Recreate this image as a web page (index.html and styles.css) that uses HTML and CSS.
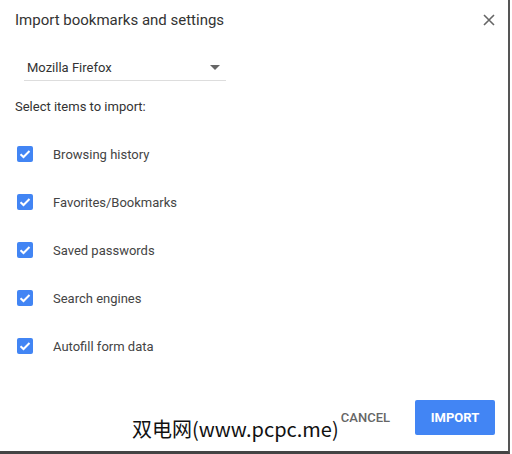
FILE: index.html
```html
<!DOCTYPE html>
<html lang="en">

<head>
  <meta charset="UTF-8">
  <title>Import bookmarks and settings</title>
  <link rel="stylesheet" href="styles.css">
</head>

<body>
  <div class="dialog">
    <div class="header">
      <div class="title">Import bookmarks and settings</div>
      <svg class="close" width="12" height="12" viewBox="0 0 12 12">
        <path d="M1 1L11 11M11 1L1 11" stroke="#666" stroke-width="1.6" />
      </svg>
    </div>

    <div class="select">
      <span>Mozilla Firefox</span>
      <svg class="arrow" width="10" height="5" viewBox="0 0 10 5">
        <path d="M0 0H10L5 5Z" fill="#666" />
      </svg>
    </div>

    <div class="hint">Select items to import:</div>

    <div class="items">
      <div class="item"><span class="box"><svg width="16" height="16" viewBox="0 0 16 16"><path d="M3.5 8.2L6.5 11L12.5 5" stroke="#fff" stroke-width="2" fill="none" /></svg></span>Browsing history</div>
      <div class="item"><span class="box"><svg width="16" height="16" viewBox="0 0 16 16"><path d="M3.5 8.2L6.5 11L12.5 5" stroke="#fff" stroke-width="2" fill="none" /></svg></span>Favorites/Bookmarks</div>
      <div class="item"><span class="box"><svg width="16" height="16" viewBox="0 0 16 16"><path d="M3.5 8.2L6.5 11L12.5 5" stroke="#fff" stroke-width="2" fill="none" /></svg></span>Saved passwords</div>
      <div class="item"><span class="box"><svg width="16" height="16" viewBox="0 0 16 16"><path d="M3.5 8.2L6.5 11L12.5 5" stroke="#fff" stroke-width="2" fill="none" /></svg></span>Search engines</div>
      <div class="item"><span class="box"><svg width="16" height="16" viewBox="0 0 16 16"><path d="M3.5 8.2L6.5 11L12.5 5" stroke="#fff" stroke-width="2" fill="none" /></svg></span>Autofill form data</div>
    </div>

    <div class="footer">
      <span class="watermark">双电网(www.pcpc.me)</span>
      <button class="cancel">CANCEL</button>
      <button class="import">IMPORT</button>
    </div>
  </div>
</body>

</html>
```

FILE: styles.css
```css
body {
  margin: 0;
  background-color: #fff;
  font-family: Roboto, "Liberation Sans", sans-serif;
  color: #333;
}

.dialog {
  width: 508px;
  height: 451px;
  border-right: 2px solid #555;
  border-bottom: 3px solid #444;
  display: flex;
  flex-direction: column;
}

.header {
  display: flex;
  justify-content: space-between;
  align-items: center;
  padding: 10px 13px 0 15px;
  height: 20px;
}

.title {
  font-size: 15px;
  color: #333;
}

.select {
  margin: 24px 0 0 24px;
  width: 202px;
  height: 27px;
  border-bottom: 1px solid #ddd;
  display: flex;
  align-items: center;
  justify-content: space-between;
  padding: 0 0 0 3px;
  box-sizing: border-box;
  font-size: 13px;
  color: #333;
}

.arrow {
  margin-right: 6px;
}

.hint {
  margin: 17px 0 0 15px;
  font-size: 13px;
  height: 17px;
  line-height: 17px;
}

.items {
  margin-top: 15px;
  display: flex;
  flex-direction: column;
}

.item {
  height: 48px;
  display: flex;
  align-items: center;
  padding-left: 17px;
  font-size: 13px;
  color: #444;
}

.box {
  width: 16px;
  height: 16px;
  background-color: #4285f4;
  border-radius: 2px;
  margin-right: 20px;
  display: flex;
}

.footer {
  margin-top: auto;
  margin-bottom: 16px;
  display: flex;
  align-items: center;
  justify-content: flex-end;
  padding-right: 13px;
  position: relative;
}

.watermark {
  position: absolute;
  left: 132px;
  top: 14px;
  font-family: "Noto Sans CJK SC", "DejaVu Sans Mono", sans-serif;
  font-size: 20px;
  color: #111;
}

.cancel {
  background: none;
  border: none;
  font-family: Roboto, "Liberation Sans", sans-serif;
  font-size: 13px;
  font-weight: 500;
  color: #666;
  padding: 0;
  margin-right: 25px;
}

.import {
  background-color: #4285f4;
  border: none;
  border-radius: 2px;
  color: #fff;
  font-family: Roboto, "Liberation Sans", sans-serif;
  font-size: 13px;
  font-weight: 700;
  width: 80px;
  height: 35px;
  padding: 0;
}
```
